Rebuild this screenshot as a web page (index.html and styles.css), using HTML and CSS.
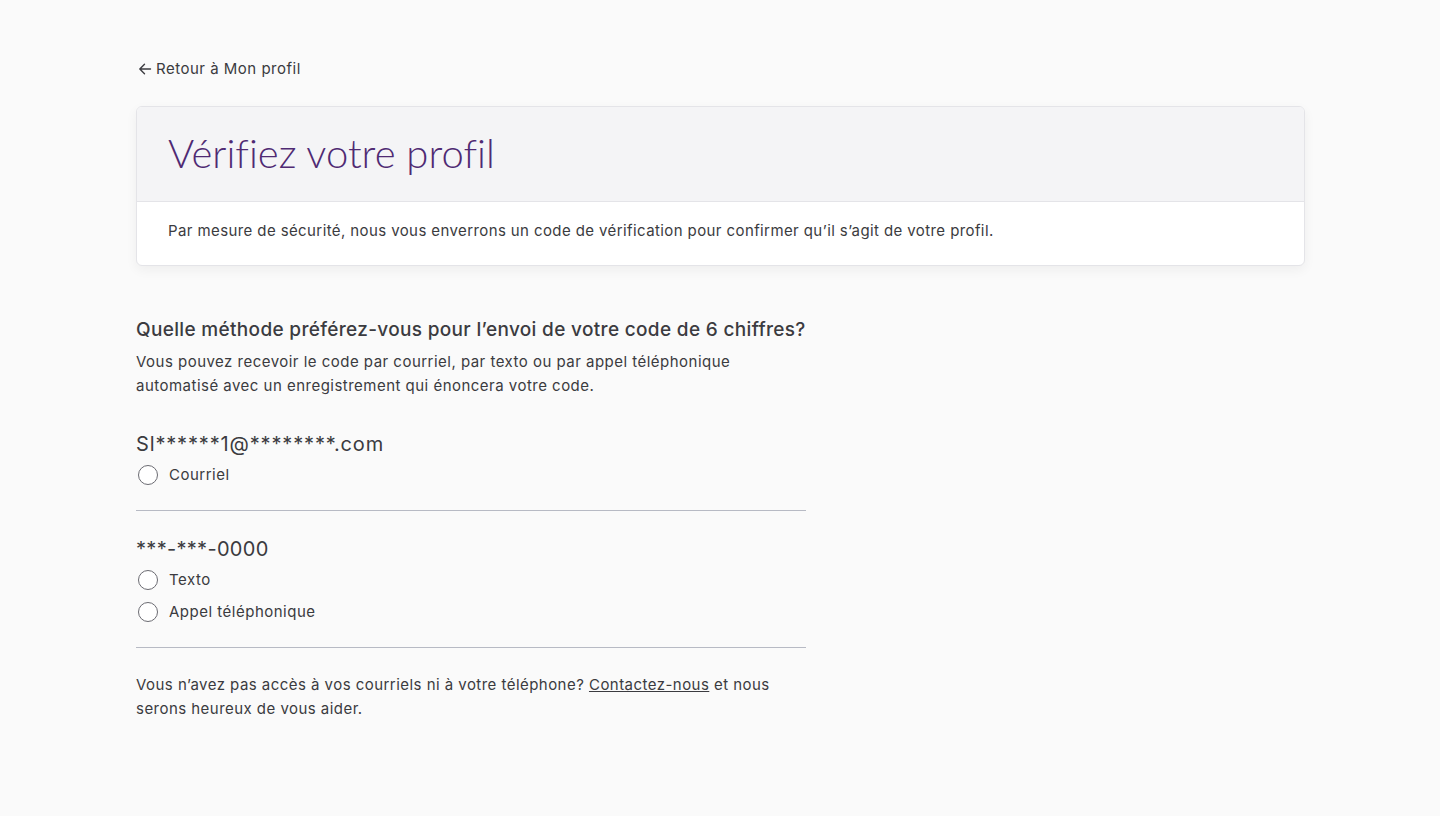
FILE: index.html
```html
<!DOCTYPE html>
<html lang="fr">
<head>
<meta charset="utf-8">
<link rel="stylesheet" href="styles.css">
</head>
<body>
<main class="page">
  <a class="back" href="#"><svg class="arrow" width="14" height="14" viewBox="0 0 14 14" fill="none" stroke="currentColor" stroke-width="1.4" stroke-linecap="round" stroke-linejoin="round"><path d="M12.5 7H1.8M6.5 2.3L1.8 7l4.7 4.7"/></svg>Retour à Mon profil</a>
  <section class="card">
    <div class="card-head"><h1>Vérifiez votre profil</h1></div>
    <div class="card-body"><p>Par mesure de sécurité, nous vous enverrons un code de vérification pour confirmer qu’il s’agit de votre profil.</p></div>
  </section>
  <section class="methods">
    <h2>Quelle méthode préférez-vous pour l’envoi de votre code de 6 chiffres?</h2>
    <p class="intro">Vous pouvez recevoir le code par courriel, par texto ou par appel téléphonique automatisé avec un enregistrement qui énoncera votre code.</p>
    <div class="group">
      <div class="contact email">Sl******1@********.com</div>
      <label class="radio"><span class="circle"></span>Courriel</label>
    </div>
    <div class="group">
      <div class="contact phone">***-***-0000</div>
      <label class="radio"><span class="circle"></span>Texto</label>
      <label class="radio"><span class="circle"></span>Appel téléphonique</label>
    </div>
    <p class="help">Vous n’avez pas accès à vos courriels ni à votre téléphone? <a href="#">Contactez-nous</a> et nous serons heureux de vous aider.</p>
  </section>
</main>
</body>
</html>
```
FILE: styles.css
```css
html, body { margin: 0; padding: 0; }
body {
  background: #fafafa;
  font-family: Inter, "Liberation Sans", sans-serif;
  color: #3b3b40;
  letter-spacing: 0.4px;
}
.page {
  width: 1169px;
  margin: 0 0 0 136px;
  padding-top: 59px;
}
.back {
  display: inline-flex;
  align-items: center;
  gap: 4px;
  color: #3b3b40;
  text-decoration: none;
  font-size: 15px;
  line-height: 20px;
  letter-spacing: 0.5px;
  margin-left: 2px;
}
.arrow { display: block; }
.card {
  margin-top: 26px;
  background: #fff;
  border: 1px solid #e4e4e8;
  border-radius: 6px;
  box-shadow: 0 4px 12px rgba(0,0,0,0.05);
  overflow: hidden;
}
.card-head {
  background: #f4f4f6;
  border-bottom: 1px solid #e4e4e8;
  height: 95px;
  box-sizing: border-box;
  display: flex;
  align-items: center;
  padding: 0 31px 2px;
}
.card-head h1 {
  margin: 0;
  font-family: Lato, sans-serif;
  font-weight: 300;
  font-size: 40px;
  letter-spacing: 0;
  color: #4f2a73;
  font-variant-ligatures: none;
}
.card-body {
  height: 63px;
  padding: 19px 31px 0;
  box-sizing: border-box;
}
.card-body p { margin: 0; font-size: 15px; line-height: 20px; }
.methods { width: 670px; margin-top: 50px; }
.methods h2 {
  margin: 0;
  font-size: 19px;
  font-weight: 500;
  line-height: 28px;
  letter-spacing: 0.33px;
}
.intro { margin: 6px 0 0; font-size: 15px; line-height: 24px; letter-spacing: 0.48px; }
.group {
  border-bottom: 1px solid #b7bac4;
  padding: 32px 0 23px;
}
.group + .group { padding-top: 24px; }
.contact { font-size: 20px; line-height: 28px; }
.email { letter-spacing: 0.85px; }
.phone { letter-spacing: 0.3px; }
.radio {
  display: flex;
  align-items: center;
  gap: 11px;
  font-size: 15px;
  line-height: 24px;
  letter-spacing: 0.5px;
  margin-top: 5px;
}
.radio + .radio { margin-top: 8px; }
.circle {
  width: 18px; height: 18px;
  border: 1px solid #6b6b72;
  border-radius: 50%;
  margin-left: 2px;
  background: #fff;
}
.help { margin: 25px 0 0; font-size: 15px; line-height: 24px; letter-spacing: 0.46px; }
.help a { color: inherit; }
```
